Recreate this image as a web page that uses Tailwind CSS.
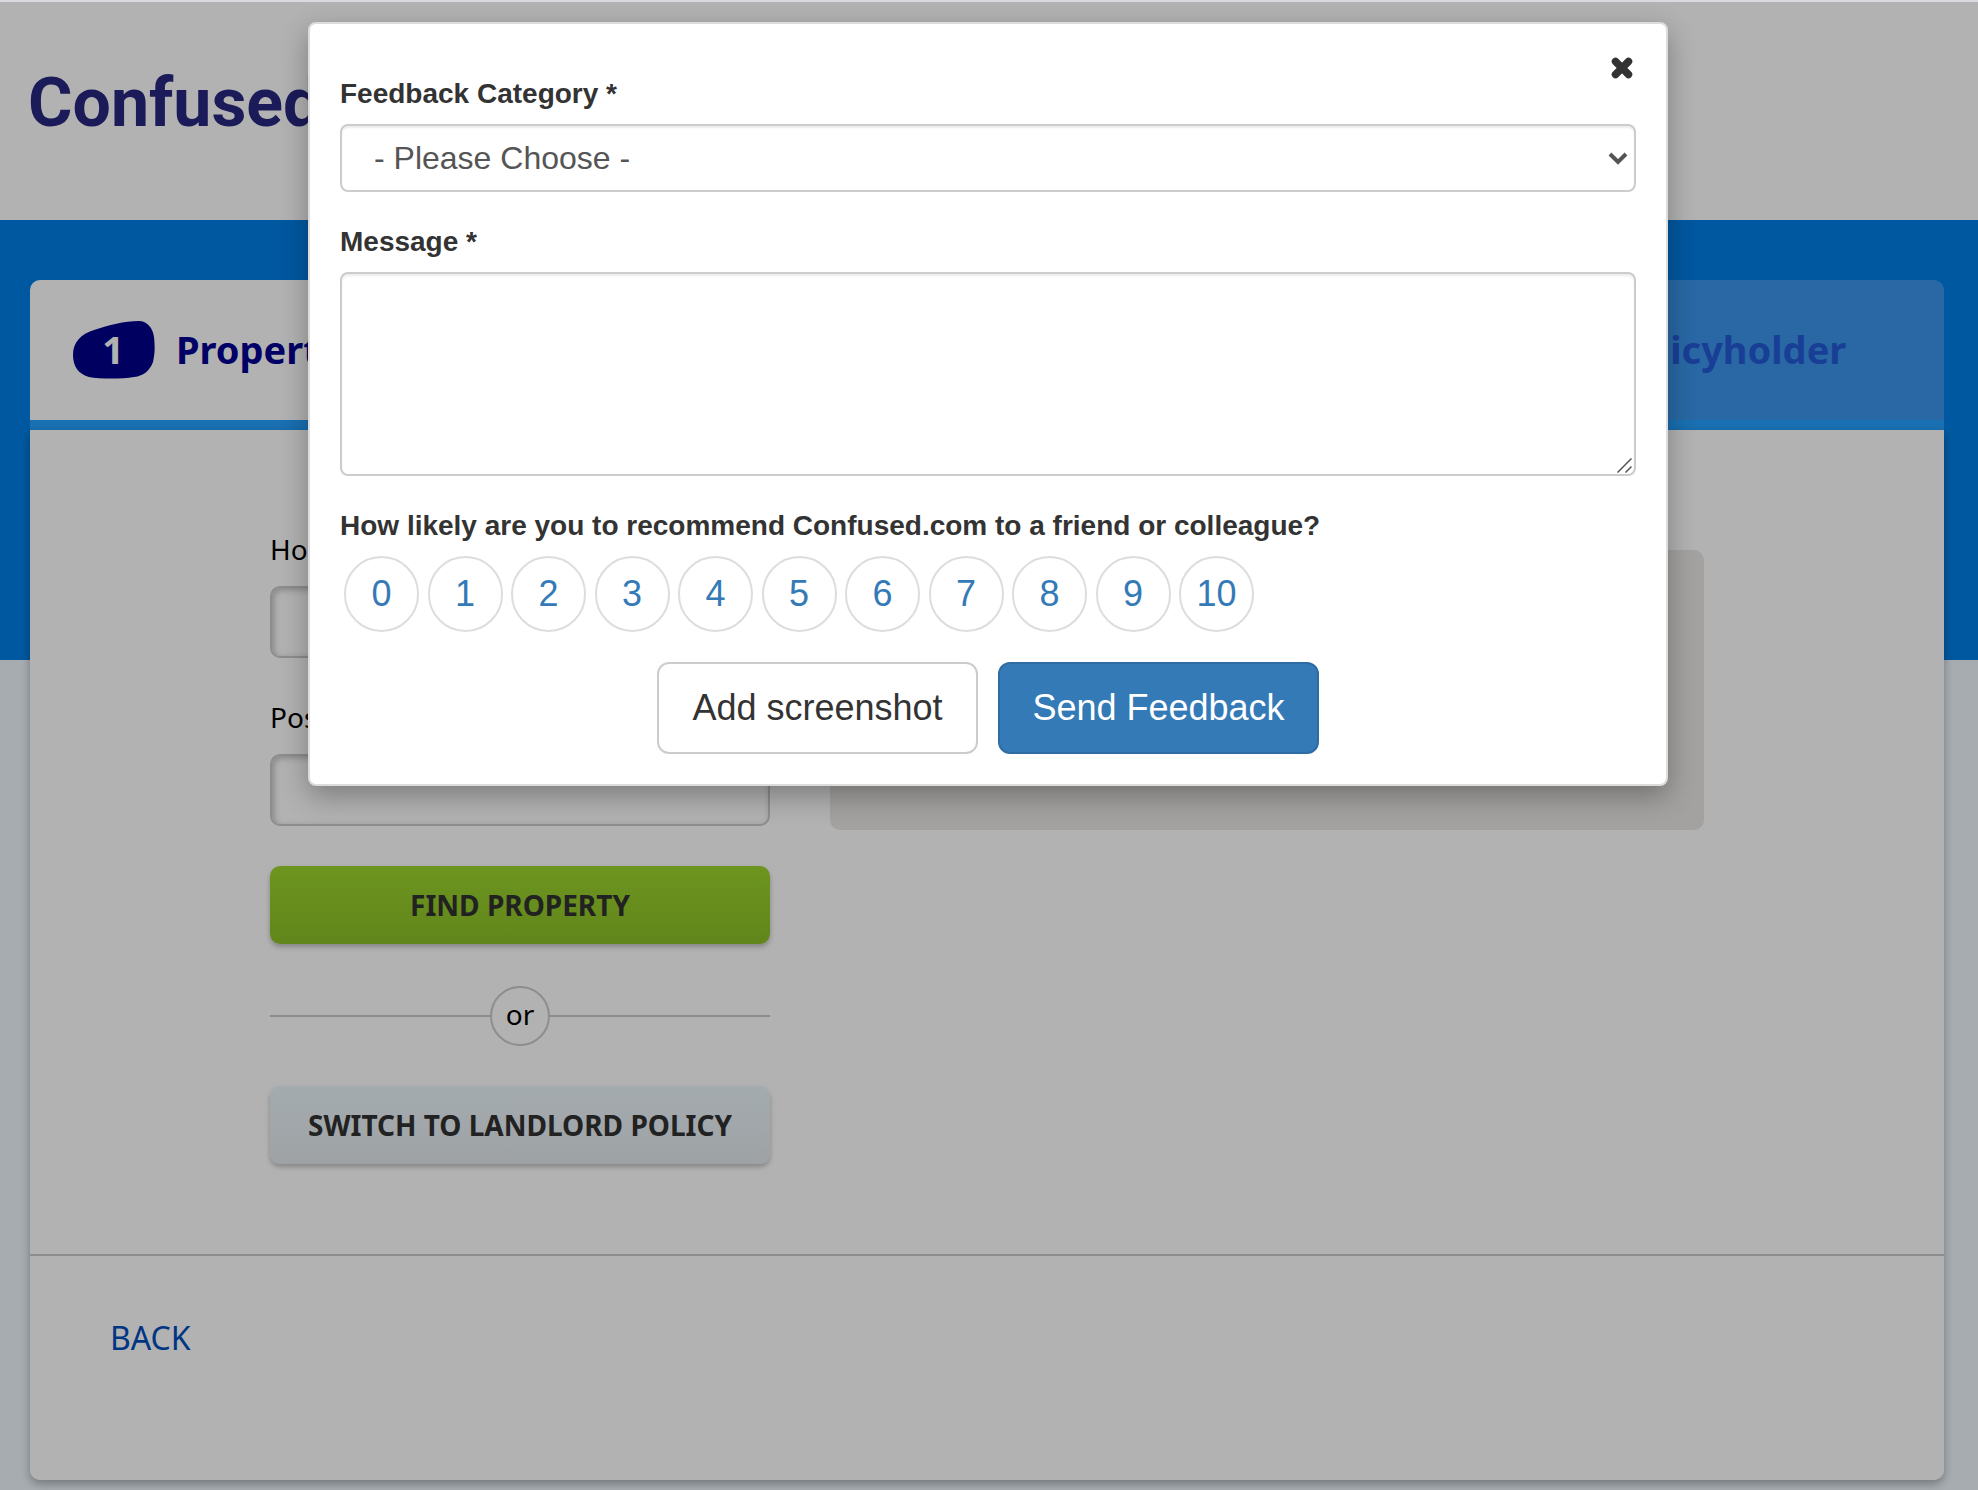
<!DOCTYPE html>
<html lang="en">
<head>
    <meta charset="UTF-8">
    <meta name="viewport" content="width=device-width, initial-scale=1.0">
    <title>Confused.com - Home insurance</title>
    <script src="https://cdn.jsdelivr.net/npm/@tailwindcss/browser@4"></script>
</head>
<body class="relative min-h-screen bg-[#eff7fd] border-t-2 border-[#d9d9e0] font-['Noto_Sans','Open_Sans',sans-serif] text-black">

    <header class="h-[218px] bg-white px-7 pt-[56px]">
        <a href="#" class="text-[68px] leading-[90px] font-bold text-[#282882] font-['Roboto',sans-serif]">Confused.com</a>
    </header>

    <main class="pl-[30px] pr-[34px] pt-[60px] pb-[10px] bg-[linear-gradient(#007fe5_440px,#eff7fd_440px)]">

        <!-- steps -->
        <nav class="grid grid-cols-4 h-[150px] rounded-t-[10px] overflow-hidden bg-[#3b95ec] border-b-[10px] border-[#25a1ff] text-[38px] font-bold">
            <a href="#" class="flex items-center gap-[22px] pl-[42px] pb-0.5 bg-white text-[#000092]">
                <span class="relative w-[82px] h-[60px] flex items-center justify-center text-white">
                    <svg class="absolute inset-0" width="84" height="62" viewBox="0 0 84 62" fill="#00008c">
                        <path d="M1 36C1 23 9 15 22 11C37 6 52 2 67 2C75 2 81 9 82 18C83 28 83 34 81 43C78 51 72 57 62 58C50 60 28 60 17 58C7 55 1 48 1 36Z"/>
                    </svg>
                    <span class="relative">1</span>
                </span>
                Property
            </a>
            <a href="#" class="col-start-4 flex items-center gap-[22px] pl-[42px] pb-0.5 text-[#255ad6]">
                <span class="w-[82px] text-center">4</span>
                Policyholder
            </a>
        </nav>

        <div class="rounded-b-[10px] shadow-[0_4px_10px_rgba(0,0,0,0.3)]">
            <!-- property form -->
            <section class="grid grid-cols-[500px_1fr] gap-[60px] px-[240px] pt-[100px] pb-[90px] bg-white border-b-2 border-[#cbcbcb]">
                <form class="flex flex-col text-[28px]">
                    <label for="house" class="leading-[38px] mb-[18px]">House number</label>
                    <input id="house" type="text" class="h-[72px] px-4 mb-10 rounded-[10px] border-2 border-[#cbcbcb] bg-white shadow-[inset_2px_2px_6px_rgba(0,0,0,0.25)]">
                    <label for="postcode" class="leading-[38px] mb-[18px]">Postcode</label>
                    <input id="postcode" type="text" class="h-[72px] px-4 mb-10 rounded-[10px] border-2 border-[#cbcbcb] bg-white shadow-[inset_2px_2px_6px_rgba(0,0,0,0.25)]">
                    <button type="button" class="h-[78px] rounded-[10px] bg-linear-to-b from-[#9dd62d] to-[#8bc027] font-bold text-[#313131] shadow-[0_3px_5px_rgba(0,0,0,0.25)]">FIND PROPERTY</button>
                    <div class="flex items-center mt-[42px] mb-10">
                        <span class="flex-1 h-0.5 bg-[#cbcbcb]"></span>
                        <span class="size-[60px] flex items-center justify-center pb-1 rounded-full border-2 border-[#cbcbcb]">or</span>
                        <span class="flex-1 h-0.5 bg-[#cbcbcb]"></span>
                    </div>
                    <button type="button" class="h-[78px] rounded-[10px] bg-linear-to-b from-[#ebf5fb] to-[#e3e9ed] font-bold text-[#313131] shadow-[0_3px_5px_rgba(0,0,0,0.25)]">SWITCH TO LANDLORD POLICY</button>
                </form>
                <aside class="h-[280px] mt-5 rounded-[10px] bg-[#ebe9e5]"></aside>
            </section>

            <div class="h-[224px] pl-20 pt-[59px] rounded-b-[10px] bg-white">
                <a href="#" class="text-[32px] leading-[46px] text-[#004dbe]">BACK</a>
            </div>
        </div>
    </main>

    <!-- feedback dialog -->
    <div class="absolute inset-0 flex items-start justify-center pt-5 pr-0.5 bg-black/30 font-['Liberation_Sans',Arial,sans-serif] text-[#333]">
        <form role="dialog" aria-label="Feedback" class="relative w-full max-w-[1360px] px-[30px] pt-[50px] pb-[30px] rounded-lg border-2 border-[#dcdcdc] bg-white shadow-[0_10px_28px_rgba(0,0,0,0.3)]">
            <button type="button" aria-label="Close" class="absolute top-[30px] right-[30px] p-[3px]">
                <svg width="22" height="22" viewBox="0 0 22 22" stroke="#333" stroke-width="7.5" stroke-linecap="round">
                    <path d="M4.500 4.500L17.500 17.500M17.500 4.500L4.500 17.500"/>
                </svg>
            </button>

            <label for="category" class="block mb-2.5 text-[28px] leading-10 font-bold">Feedback Category *</label>
            <div class="relative">
                <select id="category" class="block w-full h-[68px] pl-8 pr-12 appearance-none rounded-lg border-2 border-[#ccc] bg-white text-[32px] text-[#555] shadow-[inset_0_2px_2px_rgba(0,0,0,0.075)]">
                    <option>- Please Choose -</option>
                </select>
                <svg class="absolute right-2 top-[28px] pointer-events-none" width="20" height="14" viewBox="0 0 20 14" fill="none" stroke="#555" stroke-width="4">
                    <path d="M2 2L10 10L18 2"/>
                </svg>
            </div>

            <label for="message" class="block mt-[30px] mb-2.5 text-[28px] leading-10 font-bold">Message *</label>
            <div class="relative">
                <textarea id="message" class="block w-full h-[204px] px-6 py-3 resize-none rounded-lg border-2 border-[#ccc] bg-white text-[32px] text-[#555] shadow-[inset_0_2px_2px_rgba(0,0,0,0.075)]"></textarea>
                <svg class="absolute right-1 bottom-[3px] pointer-events-none" width="15" height="15" viewBox="0 0 15 15" stroke="#555" stroke-width="1.5">
                    <path d="M0.500 14.500L14.500 0.500M8.500 14.500L14.500 8.500"/>
                </svg>
            </div>

            <fieldset class="mt-[30px]">
                <legend class="mb-2.5 text-[28px] leading-10 font-bold">How likely are you to recommend Confused.com to a friend or colleague?</legend>
                <div class="flex justify-between max-w-[910px] ml-1 text-[36px] text-[#337ab7]">
                    <label class="relative w-[75px] h-[76px] flex items-center justify-center rounded-full border-2 border-[#ddd]"><input type="radio" name="score" value="0" class="sr-only">0</label>
                    <label class="relative w-[75px] h-[76px] flex items-center justify-center rounded-full border-2 border-[#ddd]"><input type="radio" name="score" value="1" class="sr-only">1</label>
                    <label class="relative w-[75px] h-[76px] flex items-center justify-center rounded-full border-2 border-[#ddd]"><input type="radio" name="score" value="2" class="sr-only">2</label>
                    <label class="relative w-[75px] h-[76px] flex items-center justify-center rounded-full border-2 border-[#ddd]"><input type="radio" name="score" value="3" class="sr-only">3</label>
                    <label class="relative w-[75px] h-[76px] flex items-center justify-center rounded-full border-2 border-[#ddd]"><input type="radio" name="score" value="4" class="sr-only">4</label>
                    <label class="relative w-[75px] h-[76px] flex items-center justify-center rounded-full border-2 border-[#ddd]"><input type="radio" name="score" value="5" class="sr-only">5</label>
                    <label class="relative w-[75px] h-[76px] flex items-center justify-center rounded-full border-2 border-[#ddd]"><input type="radio" name="score" value="6" class="sr-only">6</label>
                    <label class="relative w-[75px] h-[76px] flex items-center justify-center rounded-full border-2 border-[#ddd]"><input type="radio" name="score" value="7" class="sr-only">7</label>
                    <label class="relative w-[75px] h-[76px] flex items-center justify-center rounded-full border-2 border-[#ddd]"><input type="radio" name="score" value="8" class="sr-only">8</label>
                    <label class="relative w-[75px] h-[76px] flex items-center justify-center rounded-full border-2 border-[#ddd]"><input type="radio" name="score" value="9" class="sr-only">9</label>
                    <label class="relative w-[75px] h-[76px] flex items-center justify-center rounded-full border-2 border-[#ddd]"><input type="radio" name="score" value="10" class="sr-only">10</label>
                </div>
            </fieldset>

            <div class="flex justify-center gap-5 mt-[30px] text-[36px]">
                <button type="button" class="w-[321px] h-[92px] rounded-xl border-2 border-[#ccc] bg-white">Add screenshot</button>
                <button type="button" class="w-[321px] h-[92px] rounded-xl border-2 border-[#2e6da4] bg-[#337ab7] text-white">Send Feedback</button>
            </div>
        </form>
    </div>
</body>
</html>
